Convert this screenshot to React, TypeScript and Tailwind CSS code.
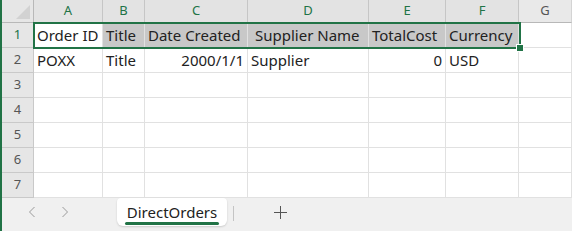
import React from "react";

const cols = ["A", "B", "C", "D", "E", "F", "G"];
const widths = ["w-[69px]", "w-[42px]", "w-[103px]", "w-[121px]", "w-[77px]", "w-[73px]", "flex-1"];

type Cell = { t?: string; right?: boolean; bg?: string; pad?: string };

const row1: Cell[] = [
  { t: "Order ID", bg: "bg-white" },
  { t: "Title", bg: "bg-[#c8c8c8]" },
  { t: "Date Created", bg: "bg-[#c8c8c8]" },
  { t: "Supplier Name", bg: "bg-[#c8c8c8]", pad: "pl-[7px]" },
  { t: "TotalCost", bg: "bg-[#c8c8c8]" },
  { t: "Currency", bg: "bg-[#c8c8c8]" },
  {},
];
const row2: Cell[] = [
  { t: "POXX" },
  { t: "Title" },
  { t: "2000/1/1", right: true },
  { t: "Supplier" },
  { t: "0", right: true },
  { t: "USD" },
  {},
];

function Row({ n, cells, active }: { n: number; cells: Cell[]; active?: boolean }) {
  return (
    <div className="flex h-[25px]">
      <div
        className={`w-[32px] shrink-0 flex items-center justify-center text-[13px] border-r border-b border-[#c9c9c9] bg-[#e6e6e6] ${
          active ? "text-[#217346]" : "text-[#555]"
        }`}
      >
        {n}
      </div>
      {cells.map((c, i) => (
        <div
          key={i}
          className={`${widths[i]} shrink-0 flex items-center border-r border-b border-[#e1e1e1] whitespace-nowrap overflow-visible text-[15px] text-[#222] ${
            c.right ? "justify-end pr-[3px]" : `justify-start ${c.pad ?? "pl-[3px]"}`
          } ${c.bg ?? "bg-white"}`}
        >
          {c.t}
        </div>
      ))}
    </div>
  );
}

export default function App() {
  const empty: Cell[] = cols.map(() => ({}));
  return (
    <div
      className="relative w-[572px] h-[231px] overflow-hidden bg-white border-l-2 border-[#217346] flex flex-col"
      style={{ fontFamily: '"Noto Sans", "Noto Sans CJK JP", sans-serif' }}
    >
      {/* column header */}
      <div className="flex h-[23px]">
        <div className="w-[32px] shrink-0 relative bg-[#e6e6e6] border-r border-b border-[#b8b8b8]">
          <svg className="absolute right-[3px] bottom-[3px]" width="14" height="14" viewBox="0 0 14 14">
            <polygon points="14,0 14,14 0,14" fill="#d2d2d2" />
          </svg>
        </div>
        {cols.map((c, i) => (
          <div
            key={c}
            className={`${widths[i]} shrink-0 flex justify-center pt-[1px] text-[13px] border-r border-b ${
              i < 6
                ? "bg-[#e3e3e3] text-[#217346] border-r-[#c6c6c6] border-b-[#b8b8b8]"
                : "bg-[#e9e9e9] text-[#555] border-r-[#d4d4d4] border-b-[#b8b8b8]"
            }`}
          >
            {c}
          </div>
        ))}
      </div>
      <Row n={1} cells={row1} active />
      <Row n={2} cells={row2} />
      <Row n={3} cells={empty} />
      <Row n={4} cells={empty} />
      <Row n={5} cells={empty} />
      <Row n={6} cells={empty} />
      <Row n={7} cells={empty} />

      {/* sheet tab bar */}
      <div className="flex-1 bg-[#f0f0f0] flex items-start">
        <div className="ml-[22px] w-[16px] h-[28px] flex items-center justify-center">
          <svg width="8" height="12" viewBox="0 0 8 12">
            <polyline points="6.5,1 1.5,6 6.5,11" fill="none" stroke="#9a9a9a" strokeWidth="1" />
          </svg>
        </div>
        <div className="ml-[17px] w-[16px] h-[28px] flex items-center justify-center">
          <svg width="8" height="12" viewBox="0 0 8 12">
            <polyline points="1.5,1 6.5,6 1.5,11" fill="none" stroke="#9a9a9a" strokeWidth="1" />
          </svg>
        </div>
        <div className="ml-[44px] w-[110px] h-[28px] bg-white rounded-b-[6px] rounded-t-[4px] shadow-[0_1px_2px_rgba(0,0,0,0.15)] flex flex-col items-center">
          <div className="h-[24px] flex items-center text-[15px] text-[#222] pt-[4px]">DirectOrders</div>
          <div className="w-[94px] h-[3px] rounded-full bg-[#217346]" />
        </div>
        <div className="ml-[6px] mt-[8px] w-px h-[15px] bg-[#c4c4c4]" />
        <div className="ml-[38px] w-[16px] h-[28px] flex items-center justify-center">
          <svg width="13" height="13" viewBox="0 0 13 13">
            <line x1="6.5" y1="0" x2="6.5" y2="13" stroke="#555" strokeWidth="1" />
            <line x1="0" y1="6.5" x2="13" y2="6.5" stroke="#555" strokeWidth="1" />
          </svg>
        </div>
      </div>

      {/* selection overlay */}
      <div className="absolute left-[31px] top-[22px] w-[488px] h-[27px] border-2 border-[#217346] pointer-events-none" />
      <div className="absolute left-[514px] top-[44px] w-[8px] h-[8px] bg-[#217346] border border-white pointer-events-none" />
    </div>
  );
}
